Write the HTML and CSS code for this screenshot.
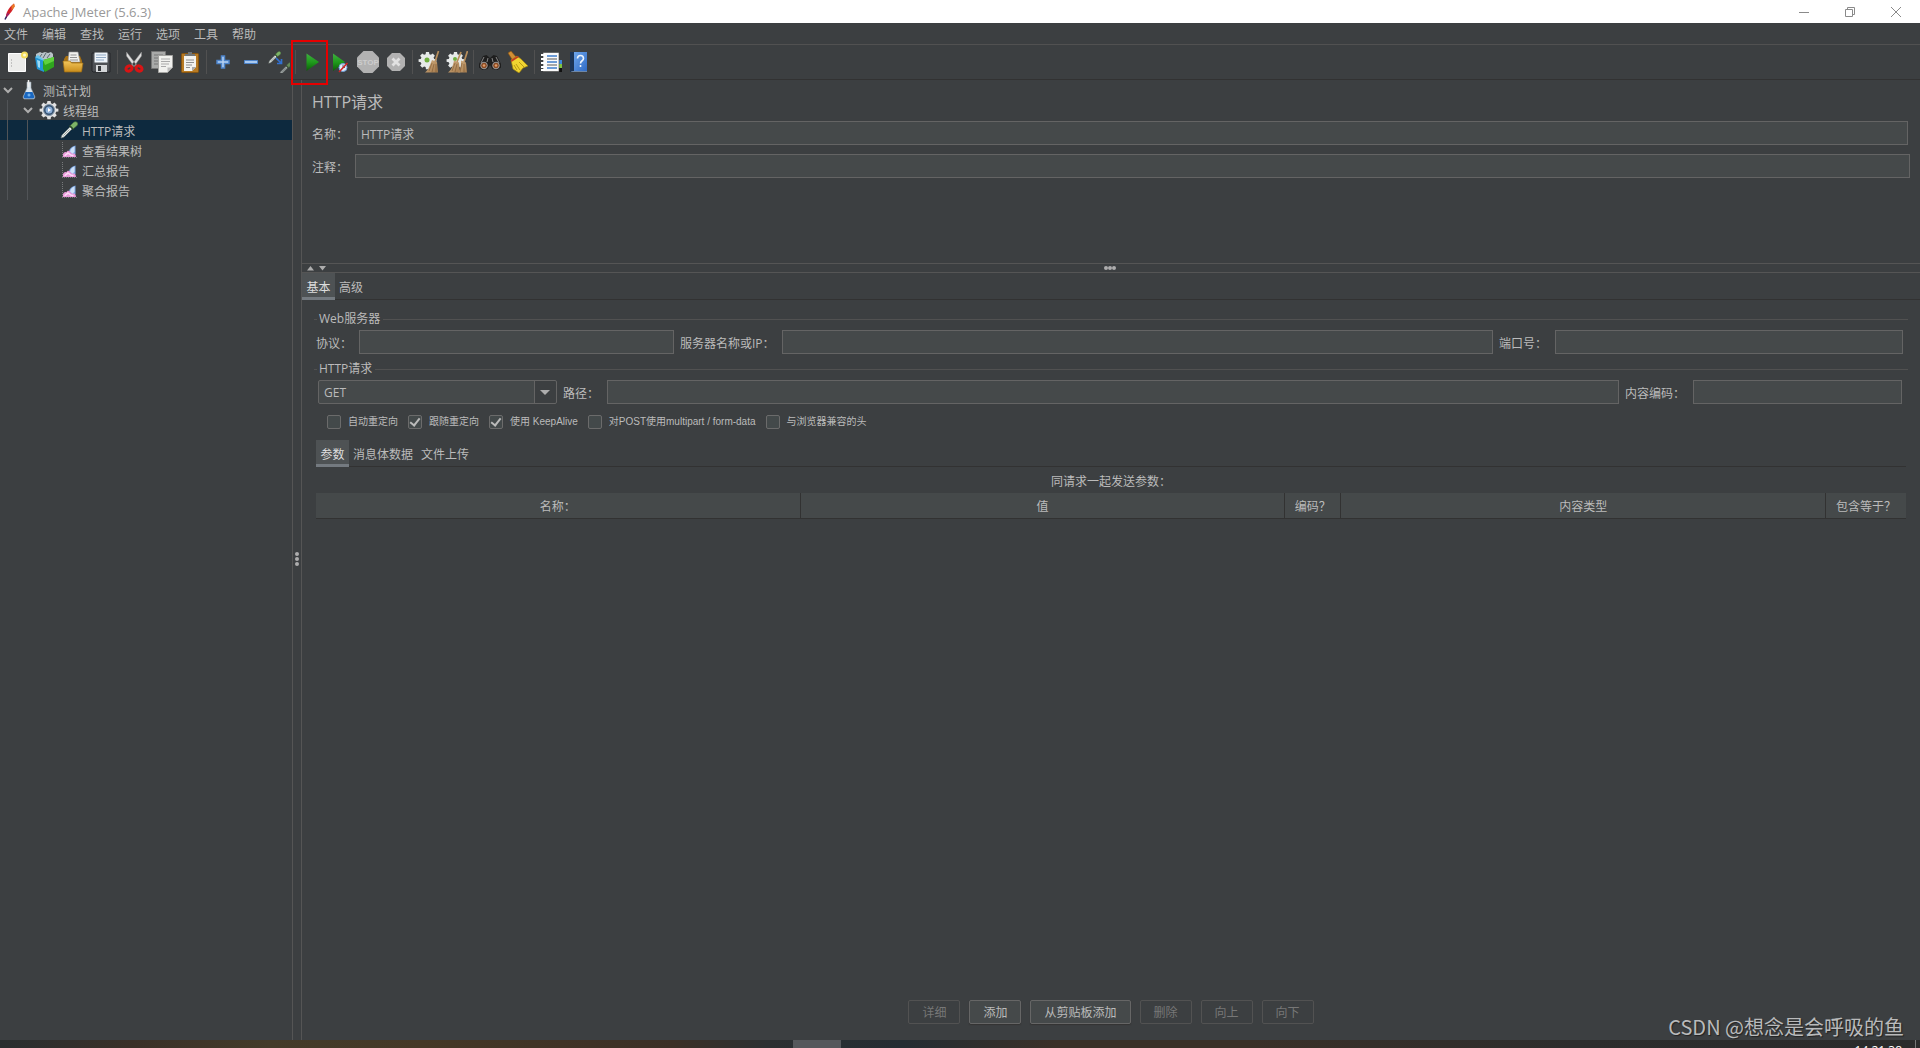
FILE: index.html
```html
<!DOCTYPE html>
<html lang="zh-CN">
<head>
<meta charset="utf-8">
<title>Apache JMeter (5.6.3)</title>
<link rel="stylesheet" href="styles.css">
</head>
<body>
<svg class="defs" aria-hidden="true">
  <defs>
    <linearGradient id="green" x1="0" y1="0" x2="0" y2="1"><stop offset="0" stop-color="#3fb040"/><stop offset=".5" stop-color="#1f9a1c"/><stop offset="1" stop-color="#0c5c08"/></linearGradient>
    <linearGradient id="gold" x1="0" y1="0" x2="0" y2="1"><stop offset="0" stop-color="#f3c65a"/><stop offset="1" stop-color="#c98d1c"/></linearGradient>
    <linearGradient id="blue" x1="0" y1="0" x2="1" y2="1"><stop offset="0" stop-color="#6ea6ec"/><stop offset="1" stop-color="#2f6ac4"/></linearGradient>
    <linearGradient id="straw" x1="0" y1="0" x2="1" y2="1"><stop offset="0" stop-color="#d3b083"/><stop offset="1" stop-color="#a47a4c"/></linearGradient>
    <symbol id="gear" viewBox="0 0 20 20">
      <path d="M8.400 1h3.200l.4 2.300 1.600.7 1.900-1.400 2.300 2.300-1.400 1.900.7 1.600 2.300.4v2.600l-2.300.4-.7 1.600 1.400 1.900-2.300 2.300-1.900-1.400-1.600.7-.4 2.300H8.400L8 16.900l-1.600-.7-1.900 1.400-2.300-2.300 1.400-1.900-.7-1.600L.6 11.400V8.800l2.300-.4.7-1.600-1.400-1.900 2.300-2.300L6.400 4 8 3.300z"/>
    </symbol>
    <symbol id="report" viewBox="0 0 16 16">
      <path d="M1.500 0v15M1 15.500h15" stroke="#77797b" stroke-dasharray="1 1" fill="none"/>
      <path d="M8 10c0-3 2.500-5.500 6.500-6.500V12l-3 1z" fill="#7fa9e4"/>
      <path d="M9 9.500c.5-2.500 2-4 4.500-5v5l-2 2.500z" fill="#cfe1f8"/>
      <path d="M2 15v-3c1-1.500 2-2.500 3.500-1.500C6 8.500 7.500 8 9 9.500c1 1.500 2 2.500 3.500 2 1.500 0 2.500 1 2.500 3.500z" fill="#ea9bdb"/>
      <path d="M4 14c0-2 2-1 2.500-3 2 0 2 3 6 2.500" stroke="#fbdcf6" stroke-width="1.500" fill="none"/>
    </symbol>
    <symbol id="pipette" viewBox="0 0 18 18">
      <path d="M1 17l1-3L10 6l2 2-8 8z" fill="#e6ecea" stroke="#77807c" stroke-width=".7"/>
      <path d="M3.500 14.500l6-6" stroke="#7b8380" stroke-width=".7"/>
      <path d="M9 5l4 4 1-1-4-4z" fill="#2d4a27"/>
      <path d="M10.500 4.500l3-3c1-1 2.500-1.200 3.500-.2 1 1 .9 2.500-.2 3.500L13.500 7.500z" fill="#7db368" stroke="#4b7a3d" stroke-width=".6"/>
    </symbol>
  </defs>
</svg>

<header class="titlebar">
  <svg width="14" height="18" viewBox="0 0 14 18"><path d="M4 15c-.5-4 2-10 8-14.500C13.500 4 9 10 5.500 13z" fill="#d22128"/><path d="M9.500 3L12 .5l1 3-3.500 4z" fill="#e97826"/><path d="M4 15c0-2 .5-4 1.500-5.500l2 1.500L5 14z" fill="#9e2064"/><path d="M3 16.500l1.500-3" stroke="#302060" stroke-width="1.500"/></svg>
  <h1>Apache JMeter (5.6.3)</h1>
  <div class="window-buttons">
    <button aria-label="最小化"><svg width="10" height="10" viewBox="0 0 10 10"><path d="M0 5.500h10"/></svg></button>
    <button aria-label="还原"><svg width="10" height="10" viewBox="0 0 10 10"><path d="M.5 2.500h7v7h-7zM2.500 2V.5h7v7H8"/></svg></button>
    <button aria-label="关闭"><svg width="10" height="10" viewBox="0 0 10 10"><path d="M0 0l10 10M10 0L0 10"/></svg></button>
  </div>
</header>

<nav class="menubar">
  <button>文件</button><button>编辑</button><button>查找</button><button>运行</button><button>选项</button><button>工具</button><button>帮助</button>
</nav>

<div class="toolbar" role="toolbar">
  <button aria-label="新建"><svg viewBox="0 0 22 22"><path d="M2.500 2.500h17v18h-17z" fill="#ececea" stroke="#fff"/><path d="M5 9h1m-1 3h1m-1 3h1" stroke="#999"/><circle cx="18.500" cy="4" r="3.500" fill="#f3dc5c"/><circle cx="18.500" cy="4" r="1.500" fill="#fffbd0"/></svg></button>
  <button aria-label="模板"><svg viewBox="0 0 22 22"><path d="M2 8V3l4-2 2 1 3-1 3 1 3-1 2 2v5l-8 3z" fill="#b9c3c8"/><path d="M5 7l3-4M9 7l3-5M13 7l3-4" stroke="#5a676e" fill="none"/><path d="M1 6l9 3v12l-7-3z" fill="#2397d8"/><path d="M3 9l3 1v7l-2-1z" fill="#9edbf5"/><path d="M9 9l11-3v10l-9 5-2-3z" fill="#2fa51e"/><path d="M9 9l11-3v4l-9 4z" fill="#5fd13c"/><path d="M1 6l3-2 5 4 1 2z" fill="#68c5ef"/></svg></button>
  <button aria-label="打开"><svg viewBox="0 0 22 22"><path d="M2 20V8l2-3h14l2 5v10z" fill="#a87112"/><path d="M7 1h9l2 10H6z" fill="#f1f1ee" stroke="#999" stroke-width=".6"/><path d="M8.500 4h6m-6.500 2.500h7M8 9h8" stroke="#929292"/><path d="M1 10h7l1.500 2H21l-1.500 9h-17z" fill="url(#gold)" stroke="#9c6b13" stroke-width=".7"/></svg></button>
  <button aria-label="保存"><svg viewBox="0 0 22 22"><path d="M2 2h18v19H3l-1-1z" fill="#4e5155" stroke="#25272a"/><path d="M4.500 1.500h13v10h-13z" fill="#eef4fa"/><path d="M6 4h10M6 6.500h10M6 9h8" stroke="#91a9c4"/><path d="M6 14h11v7H6z" fill="#d4d6d8"/><path d="M8 15h3v5H8z" fill="#34373a"/></svg></button>
  <span class="separator"></span>
  <button aria-label="剪切"><svg viewBox="0 0 22 22"><path d="M3.500 1l10 13-2.500 1.500L3.500 5zM18.500 1l-10 13 2.500 1.500L18.500 5z" fill="#dedede" stroke="#888" stroke-width=".5"/><g fill="none" stroke="#d91414" stroke-width="3"><ellipse cx="6" cy="17.500" rx="3.200" ry="2.400" transform="rotate(-30 6 17.500)"/><ellipse cx="16" cy="17.500" rx="3.200" ry="2.400" transform="rotate(30 16 17.500)"/></g></svg></button>
  <button aria-label="复制"><svg viewBox="0 0 22 22"><path d="M.5.5h14v17H.5z" fill="#a9aaa9" stroke="#777"/><path d="M3 4h9M3 7h5m-5 3h4m-4 3h4" stroke="#777"/><path d="M7.500 4.500h14v12l-5 5h-9z" fill="#f1f1ee" stroke="#a5a5a2"/><path d="M10 8h9m-9 2.500h9M10 13h8m-8 2.500h5" stroke="#aaa"/><path d="M16.500 21v-4.500H21z" fill="#bbb"/></svg></button>
  <button aria-label="粘贴"><svg viewBox="0 0 22 22"><rect x="2.500" y="2.500" width="17" height="19" rx="1" fill="#b77a23" stroke="#855411"/><path d="M5 5h12v11l-4 4H5z" fill="#f3f3f0"/><path d="M7 9h8m-8 2.500h8M7 14h6m-6 2.500h4" stroke="#8f8f8f"/><path d="M13 20v-4h4z" fill="#aaa"/><path d="M6 5V3h3V1h4v2h3v2z" fill="#707577"/></svg></button>
  <span class="separator"></span>
  <button aria-label="展开全部"><svg viewBox="0 0 22 22"><path d="M9.500 5h3v4.500H17v3h-4.500V17h-3v-4.500H5v-3h4.500z" fill="#b7d3f3" stroke="#4d84ca" stroke-width="1.500"/></svg></button>
  <button aria-label="收起全部"><svg viewBox="0 0 22 22"><path d="M4.500 9.500h13v3h-13z" fill="#a9c9ef" stroke="#4d84ca"/></svg></button>
  <button aria-label="切换"><svg viewBox="0 0 22 22"><use href="#pipette" x="0" y="0" width="13" height="13"/><use href="#pipette" x="11" y="11" width="13" height="13" opacity=".65"/><path d="M8 7l5 5M13.500 8v4.500H9" fill="none" stroke="#3270d0" stroke-width="1.700"/></svg></button>
  <span class="separator"></span>
  <button class="marked" aria-label="启动"><svg viewBox="0 0 22 22"><path d="M5.500 2.500L18 11 5.500 20z" fill="url(#green)"/></svg></button>
  <button aria-label="不停顿开始"><svg viewBox="0 0 22 22"><path d="M4 2.500L16 11 4 20z" fill="url(#green)"/><circle cx="14" cy="16.500" r="4" fill="#e5edf7" stroke="#6d9fda"/><path d="M14 13.500v3h2" stroke="#567" fill="none"/><path d="M10 21l8.500-9" stroke="#d42020" stroke-width="1.500"/></svg></button>
  <button aria-label="停止" disabled><svg viewBox="0 0 22 22"><path d="M6.500 0h9L22 6.500v9L15.500 22h-9L0 15.500v-9z" fill="#b2b2b2"/><text x="11" y="14" class="stop-text">STOP</text></svg></button>
  <button aria-label="关闭线程" disabled><svg viewBox="0 0 22 22"><path d="M7 2h8l5 5v8l-5 5H7l-5-5V7z" fill="#b2b2b2"/><path d="M7.500 7.500l7 7m0-7l-7 7" stroke="#e2e2e2" stroke-width="2.800"/></svg></button>
  <span class="separator"></span>
  <button aria-label="清除"><svg viewBox="0 0 22 22"><use href="#gear" width="19" height="19" fill="#e6e9e8"/><circle cx="9" cy="9" r="2.500" fill="#6fae3e"/><path d="M20.500 0L17 11" stroke="#b98f5c" stroke-width="1.700"/><path d="M14 9l5 2 1 10.500H7c4-3 5-8 7-12.500z" fill="url(#straw)"/><path d="M14 12l-3 8m5-7l-2 8m4-8v8" stroke="#7c5730" stroke-width=".6"/></svg></button>
  <button aria-label="清除全部"><svg viewBox="0 0 22 22"><use href="#gear" width="19" height="19" fill="#e6e9e8"/><circle cx="9" cy="8" r="2" fill="#6fae3e"/><path d="M15 1l-4 10M21.500 0L18 11" stroke="#b98f5c" stroke-width="1.700"/><path d="M8 9.500l5 2 1 10H2c4-3 5-7.500 6-12z" fill="url(#straw)"/><path d="M15 9.500l5 2 1 10h-9c3-3 3-7.500 3-12z" fill="url(#straw)"/><path d="M9 12l-3 8m5-7l-2 8m7-9l-2 9m4-8v8" stroke="#7c5730" stroke-width=".6"/></svg></button>
  <span class="separator"></span>
  <button aria-label="查找"><svg viewBox="0 0 22 22"><path d="M0 13l4-8 3.500-1L11 7l3.500-3L18 5l4 8v3.500L18.500 19l-5-1-2.500-4-2.500 4-5 1L0 16.500z" fill="#1e1e1e"/><path d="M5 6l-3 6M9 7l-1 4m9-5l3 6m-7-5l1 4" stroke="#888" fill="none"/><circle cx="5" cy="14.500" r="3.300" fill="#8a4a22" stroke="#999"/><circle cx="17" cy="14.500" r="3.300" fill="#8a4a22" stroke="#999"/><circle cx="5" cy="14.500" r="1.300" fill="#df9b69"/><circle cx="17" cy="14.500" r="1.300" fill="#df9b69"/></svg></button>
  <button aria-label="重置搜索"><svg viewBox="0 0 22 22"><path d="M1 2l3-2 6 7-4 3z" fill="#d18f35" stroke="#875313" stroke-width=".6"/><path d="M4 9l6-4 4 3 7 7-5 2-4 5-6-4z" fill="#f0d331" stroke="#9c8110" stroke-width=".7"/><path d="M4 9l6.500-4 1.500 1-7.500 5z" fill="#c33b22"/><path d="M9 13l4 6m-1-8l5 5M7 14l3 5" stroke="#b89a14" fill="none"/></svg></button>
  <span class="separator"></span>
  <button aria-label="函数助手"><svg viewBox="0 0 22 22"><path d="M19 9h3v4h-3z" fill="#3e87dc"/><path d="M19 13h3v4h-3z" fill="#7fc441"/><path d="M19 17h3v4h-3z" fill="#111"/><path d="M3 1.500h16v19H3z" fill="#fafafa" stroke="#444" stroke-width=".6"/><path d="M1 4h4M1 8h4m-4 4h4m-4 4h4m-4 3h4" stroke="#fff" stroke-width="1.800"/><path d="M7 5h10M7 11h10M7 17h10" stroke="#3f7dcb" stroke-width="1.300"/><path d="M7 8h10M7 14h10" stroke="#555"/></svg></button>
  <button aria-label="帮助"><svg viewBox="0 0 22 22"><path d="M2 1h5v20H2z" fill="#1c3455"/><path d="M6 1h13v19H6z" fill="url(#blue)"/><path d="M3 20.500L5 20h14v1H3z" fill="#6f87a5"/><path d="M9.500 7.500c0-4 6-4 6 0 0 2.500-3 2-3 5M12.500 14v2" stroke="#eef5fd" stroke-width="1.600" fill="none"/></svg></button>
</div>

<main class="workspace">
  <nav class="tree" role="tree" aria-label="测试计划">
    <div class="node" role="treeitem"><svg class="twisty" viewBox="0 0 10 10"><path d="M1 3l4 4 4-4"/></svg><svg width="20" height="20" viewBox="0 0 20 20"><path d="M8 2h4v6l4 9-1 2H5l-1-2 4-9z" fill="#dce6ee" stroke="#9aa5ad" stroke-width=".6"/><path d="M6.500 12h7l2 5-1 1.500h-9L4.500 17z" fill="#1a68c0"/><path d="M9.500 0v7" stroke="#eee" stroke-width="1.500"/><circle cx="10" cy="15" r="1.500" fill="#6fb0ee"/></svg><span>测试计划</span></div>
    <div class="node level-1" role="treeitem"><svg class="twisty" viewBox="0 0 10 10"><path d="M1 3l4 4 4-4"/></svg><svg width="20" height="20" viewBox="0 0 20 20"><use href="#gear" width="20" height="20" fill="#e2e2e2"/><circle cx="10" cy="10" r="5.500" fill="#34506f" stroke="#89a"/><circle cx="10" cy="10" r="3.500" fill="#8caed6"/><path d="M9 8l3 2-3 2z" fill="#fff"/></svg><span>线程组</span></div>
    <div class="node level-2 selected" role="treeitem" aria-selected="true"><svg width="18" height="18"><use href="#pipette"/></svg><span>HTTP请求</span></div>
    <div class="node level-2" role="treeitem"><svg width="18" height="16"><use href="#report" width="16" height="16" x="1"/></svg><span>查看结果树</span></div>
    <div class="node level-2" role="treeitem"><svg width="18" height="16"><use href="#report" width="16" height="16" x="1"/></svg><span>汇总报告</span></div>
    <div class="node level-2" role="treeitem"><svg width="18" height="16"><use href="#report" width="16" height="16" x="1"/></svg><span>聚合报告</span></div>
  </nav>
  <div class="divider" role="separator"><i></i><i></i><i></i></div>

  <section class="editor">
    <div class="summary">
      <h2>HTTP请求</h2>
      <div class="line"><label for="name">名称：</label><input id="name" type="text" value="HTTP请求"></div>
      <div class="line comment"><label for="comment">注释：</label><input id="comment" type="text"></div>
    </div>
    <div class="splitter" role="separator">
      <svg width="20" height="6" viewBox="0 0 20 6"><path d="M0 5.500L3.500 1 7 5.500zM12 1h7l-3.500 4.500z" fill="#adadad"/></svg>
      <span class="dots"><i></i><i></i><i></i></span>
    </div>
    <div class="tabs" role="tablist"><button role="tab" class="active">基本</button><button role="tab">高级</button></div>

    <form class="request">
      <fieldset>
        <legend>Web服务器</legend>
        <div class="server-row">
          <label for="protocol">协议：</label><input id="protocol" type="text">
          <label for="server">服务器名称或IP：</label><input id="server" type="text">
          <label for="port">端口号：</label><input id="port" type="text">
        </div>
      </fieldset>
      <fieldset>
        <legend>HTTP请求</legend>
        <div class="path-row">
          <span class="combo"><select aria-label="方法"><option>GET</option></select></span>
          <label for="path">路径：</label><input id="path" type="text">
          <label for="encoding">内容编码：</label><input id="encoding" type="text">
        </div>
        <div class="options">
          <label><input type="checkbox">自动重定向</label>
          <label><input type="checkbox" checked>跟随重定向</label>
          <label><input type="checkbox" checked>使用 KeepAlive</label>
          <label><input type="checkbox">对POST使用multipart / form-data</label>
          <label><input type="checkbox">与浏览器兼容的头</label>
        </div>
      </fieldset>
      <div class="tabs inner" role="tablist"><button type="button" role="tab" class="active">参数</button><button type="button" role="tab">消息体数据</button><button type="button" role="tab">文件上传</button></div>
      <table>
        <caption>同请求一起发送参数：</caption>
        <colgroup><col><col><col class="narrow"><col><col class="include"></colgroup>
        <thead><tr><th>名称：</th><th>值</th><th>编码？</th><th>内容类型</th><th>包含等于？</th></tr></thead>
      </table>
      <div class="actions">
        <button type="button" disabled>详细</button>
        <button type="button">添加</button>
        <button type="button">从剪贴板添加</button>
        <button type="button" disabled>删除</button>
        <button type="button" disabled>向上</button>
        <button type="button" disabled>向下</button>
      </div>
    </form>
  </section>
</main>

<footer class="taskbar"><span class="task"></span><time>14:21:38</time></footer>
<div class="watermark">CSDN @想念是会呼吸的鱼</div>
</body>
</html>
```
FILE: styles.css
```css
*, *::before, *::after { box-sizing: border-box; }

body {
  margin: 0;
  height: 100vh;
  display: flex;
  flex-direction: column;
  overflow: hidden;
  position: relative;
  background: #3c3f41;
  color: #bbb;
  font: 12px/16px "Open Sans", "Noto Sans CJK SC", sans-serif;
}

button, input, select { font: inherit; color: inherit; margin: 0; }
button { background: none; border: 0; padding: 0; white-space: nowrap; }
label { white-space: nowrap; }
.defs { position: absolute; width: 0; height: 0; }

/* Window title */
.titlebar {
  flex: none;
  height: 23px;
  display: flex;
  align-items: center;
  gap: 7px;
  padding-left: 2px;
  background: #fff;
  color: #999;
}
.titlebar h1 { flex: 1; margin: 0; font-size: 13px; font-weight: 400; }
.window-buttons { display: flex; height: 20px; }
.window-buttons button { width: 46px; display: grid; place-items: center; }
.window-buttons button:last-child { width: 47px; padding-right: 2px; }
.window-buttons path { fill: none; stroke: #8a8a8a; }

.menubar {
  flex: none;
  height: 22px;
  display: flex;
  align-items: center;
  gap: 14px;
  padding: 2px 0 0 4px;
  border-bottom: 1px solid #515151;
}

.toolbar {
  flex: none;
  height: 35px;
  display: flex;
  align-items: center;
  padding-left: 3px;
  border-bottom: 1px solid #323232;
}
.toolbar button { width: 28px; height: 24px; display: grid; place-items: center; position: relative; }
.toolbar svg { width: 22px; height: 22px; display: block; }
.separator { width: 5px; height: 24px; display: flex; justify-content: center; }
.separator::before { content: ""; width: 1px; background: #515151; }
.stop-text { font: 700 8px "Liberation Sans", sans-serif; fill: #cdcdcd; text-anchor: middle; }
.marked::after {
  content: "";
  position: absolute;
  left: -7px;
  top: -10px;
  width: 37px;
  height: 45px;
  border: 2px solid #e60000;
  z-index: 2;
}

.workspace { flex: 1; min-height: 0; display: flex; }

/* Test plan tree */
.tree { width: 292px; flex: none; }
.node { height: 20px; display: flex; align-items: center; padding-left: 3px; }
.node span { margin-left: 4px; padding-top: 3px; }
.level-1 { padding-left: 23px; }
.level-2 { padding-left: 60px; }
.level-1, .level-2 {
  background: linear-gradient(#515457, #515457) 7px 0 / 1px 100% no-repeat;
}
.level-2 {
  background-image: linear-gradient(#515457, #515457), linear-gradient(#515457, #515457);
  background-position: 7px 0, 27px 0;
}
.selected { background-color: #0d293e; }
.twisty { width: 10px; height: 10px; margin-right: 6px; }
.twisty path { fill: none; stroke: #adadad; stroke-width: 2; }

.divider {
  width: 10px;
  flex: none;
  display: flex;
  flex-direction: column;
  align-items: center;
  justify-content: center;
  gap: 1px;
  padding-bottom: 2px;
  border: solid #555;
  border-width: 0 1px;
}
.divider i, .dots i { width: 4px; height: 4px; border-radius: 2px; background: #adadad; }

/* Element editor */
.editor { flex: 1; min-width: 0; display: flex; flex-direction: column; }
.summary { height: 183px; flex: none; padding: 12px 12px 0 10px; }
.summary h2 { margin: 0 0 9px; font-size: 16px; line-height: 20px; font-weight: 400; }
.line { display: flex; align-items: center; margin-bottom: 9px; }
.line label { width: 45px; padding-top: 3px; }
.line.comment { margin-right: -2px; }
.line.comment label { width: 43px; }
input[type="text"] {
  flex: 1;
  width: 100%;
  min-width: 0;
  height: 24px;
  padding: 1px 3px 0;
  border: 1px solid #646464;
  background: #45494a;
  outline: 0;
}

.splitter {
  flex: none;
  height: 10px;
  display: flex;
  align-items: center;
  padding-left: 5px;
  border: solid #555;
  border-width: 1px 0;
}
.dots { flex: 1; display: flex; justify-content: center; margin-right: 27px; }

.tabs { flex: none; height: 27px; display: flex; border-bottom: 1px solid #323232; }
.tabs button { height: 27px; padding: 5px 4px 0; border-bottom: 3px solid transparent; }
.tabs .active { background: #4e5254; border-color: #747a80; color: #ddd; width: 33px; }

.request { flex: 1; min-height: 0; display: flex; flex-direction: column; padding: 11px 14px 16px; }
.request fieldset {
  margin: 0 -2px 7px;
  padding: 3px 4px 0 2px;
  border: 0;
  border-top: 1px solid #515151;
  min-width: 0;
}
legend { margin-left: 1px; padding: 0 3px 0 2px; line-height: 16px; }
.server-row, .path-row { display: grid; align-items: center; }
.server-row { grid-template-columns: 43px 315fr 108px 711fr 62px 348fr; margin-right: 1px; }
.path-row { grid-template-columns: 241px 50px 1012fr 74px 209fr; margin-right: 2px; }
.server-row label, .path-row label { padding-top: 3px; }
.server-row label:not(:first-child), .path-row label { padding-left: 6px; }

.combo { position: relative; margin-left: 2px; display: block; }
.combo select {
  display: block;
  width: 239px;
  height: 24px;
  padding: 1px 5px 0;
  appearance: none;
  border: 1px solid #646464;
  border-radius: 2px;
  background: linear-gradient(90deg, #45494a 215px, #646464 215px 216px, #3c3f41 216px);
  outline: 0;
}
.combo::after {
  content: "";
  position: absolute;
  right: 7px;
  top: 10px;
  border: 5px solid transparent;
  border-top-color: #adadad;
  border-bottom: 0;
}

.options {
  display: flex;
  gap: 10px;
  padding: 11px 0 0 11px;
  font-family: "Liberation Sans", "Noto Sans CJK SC", sans-serif;
  font-size: 10px;
}
.options label { display: flex; align-items: center; gap: 7px; height: 14px; }
.options input {
  width: 14px;
  height: 14px;
  appearance: none;
  border: 1px solid #6b6b6b;
  border-radius: 2px;
  background: #43494a;
}
.options input:checked::before {
  content: "";
  display: block;
  width: 6px;
  height: 10px;
  margin-left: 3px;
  border: solid #bbb;
  border-width: 0 2px 2px 0;
  transform: rotate(38deg);
}

.inner { margin-top: 4px; }
table { width: 100%; table-layout: fixed; border-collapse: separate; border-spacing: 0; }
caption { height: 26px; padding-top: 7px; }
col.narrow { width: 56px; }
col.include { width: 80px; }
th {
  height: 26px;
  padding: 3px 0 0;
  font-weight: 400;
  background: #45494a;
  border: solid #323232;
  border-width: 0 1px 1px 0;
}
th:last-child { border-right: 0; }

.actions { margin-top: auto; display: flex; justify-content: center; gap: 9px; }
.actions button {
  height: 24px;
  padding: 2px 13px 0;
  border: 1px solid #666;
  border-radius: 2px;
  background: #45494a;
  box-shadow: 0 1px 1px #333;
}
.actions button:disabled { background: none; border-color: #525252; color: #777; box-shadow: none; }

/* Desktop strip under the window */
.taskbar {
  flex: none;
  height: 8px;
  overflow: hidden;
  position: relative;
  background: linear-gradient(90deg, #292e30, #3a3028 7%, #443b2a 14%, #453827 22%, #3c2f27 35%, #2b2f31 40%, #252d33 47%, #3a3028 55%, #3a3028 65%, #2d2d2d 82%, #2b2b2b);
}
.task { display: block; width: 48px; height: 8px; margin-left: 41.3%; background: #55585c; }
.taskbar time { position: absolute; right: 18px; top: 3px; color: #fff; font-size: 12px; line-height: 16px; }
.taskbar::after { content: ""; position: absolute; right: 4px; top: 0; width: 1px; height: 8px; background: #777; }

.watermark {
  position: absolute;
  right: 16px;
  bottom: 6px;
  color: #b9babb;
  font: 20px/30px "Noto Sans CJK SC", sans-serif;
  text-shadow: 1px 1px 1px #222;
}
```
